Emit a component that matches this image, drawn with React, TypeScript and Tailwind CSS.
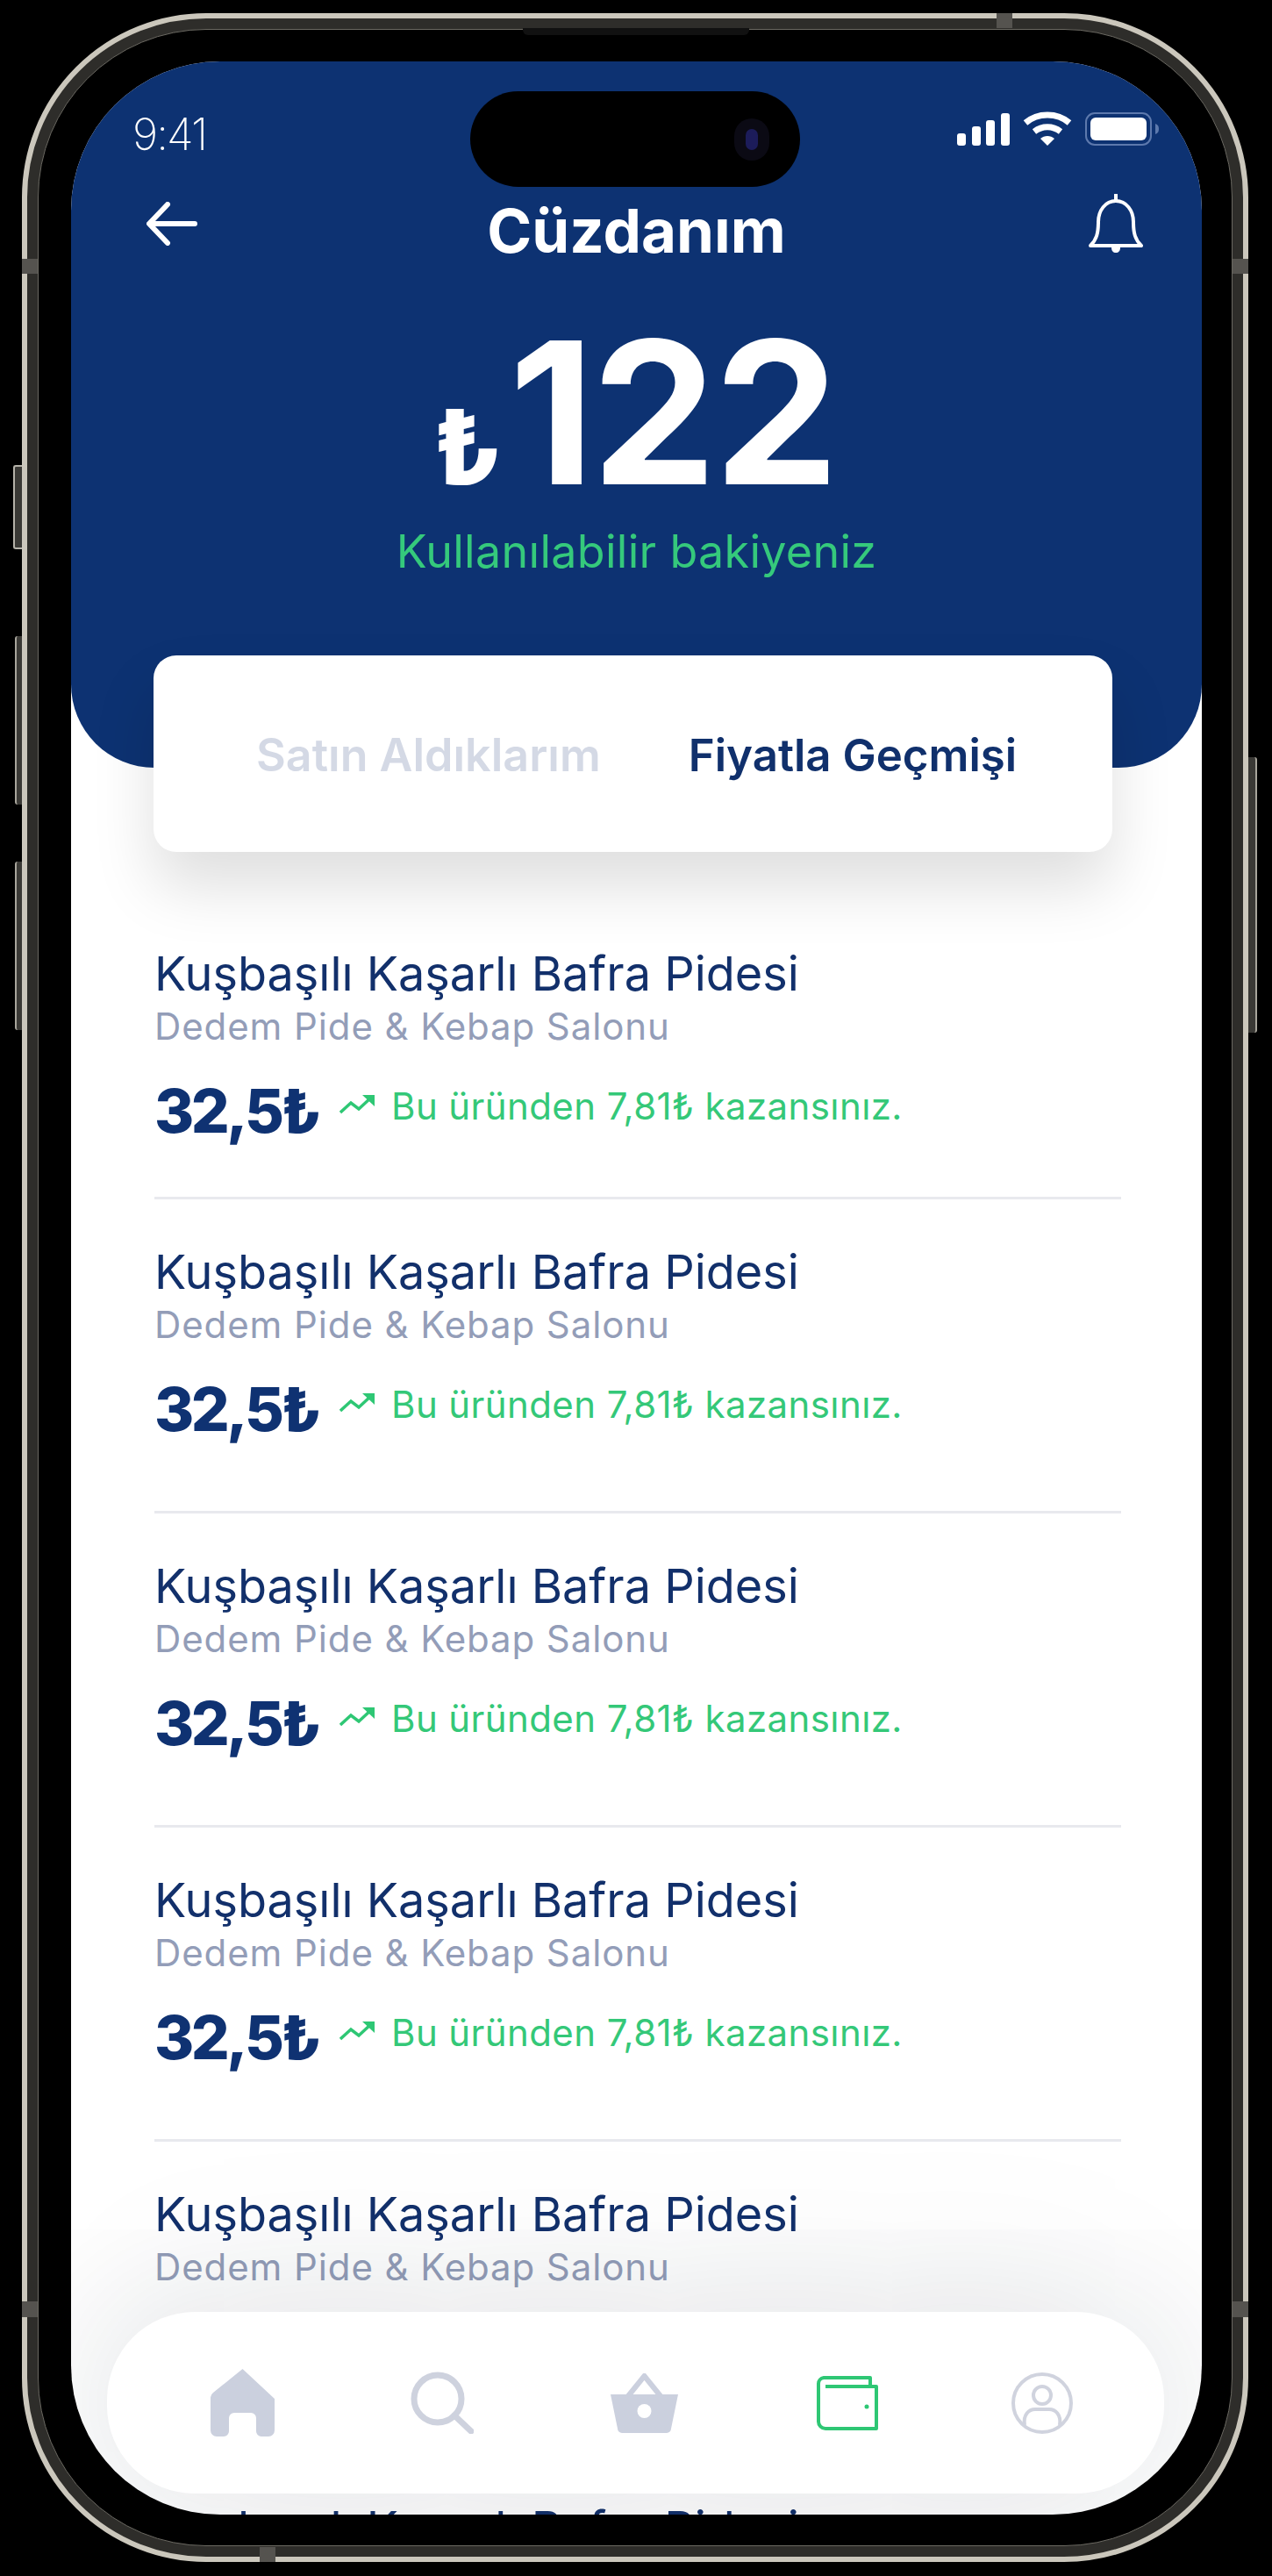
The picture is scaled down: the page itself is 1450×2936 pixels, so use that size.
const sans = "font-['Inter','Liberation_Sans',sans-serif]"

function StatusIcons() {
  return (
    <div className="flex items-center gap-[15px]">
      <svg width="60" height="37" viewBox="0 0 60 37" fill="white">
        <rect x="0" y="23" width="10" height="14" rx="3" />
        <rect x="17" y="15" width="10" height="22" rx="3" />
        <rect x="33" y="8" width="10" height="29" rx="3" />
        <rect x="50" y="0" width="10" height="37" rx="3" />
      </svg>
      <svg width="56" height="40" viewBox="0 0 56 40" fill="none" stroke="white" strokeWidth="7">
        <path d="M3 13c14-12 36-12 50 0" />
        <path d="M13 23c9-7 21-7 30 0" />
        <path d="M20 31l8 8 8-8c-4.500-4-11.500-4-16 0z" fill="white" stroke="none" />
      </svg>
      <svg width="85" height="38" viewBox="0 0 85 38" fill="none">
        <rect x="1" y="1" width="74" height="36" rx="10" stroke="#5d79ad" strokeWidth="2" />
        <rect x="6" y="6" width="64" height="26" rx="6" fill="white" />
        <path d="M80 13c3 1 4 3 4 6s-1 5-4 6z" fill="#5d79ad" />
      </svg>
    </div>
  )
}

function ListRow({ last, first }: { last?: boolean; first?: boolean }) {
  return (
    <div className={first ? 'pt-[34px]' : 'pt-[51px]'}>
      <p className={`${sans} text-[54px] leading-[64px] text-[#12306b]`}>Kuşbaşılı Kaşarlı Bafra Pidesi</p>
      <p className={`${sans} text-[42px] leading-[52px] mt-[2px] tracking-[0.9px] text-[#939db8]`}>Dedem Pide &amp; Kebap Salonu</p>
      <div className={`flex items-start mt-[32px] ${first ? 'pb-[60px]' : 'pb-[78px]'} ${last ? '' : 'border-b-[3px] border-[#e8e9ee]'}`}>
        <span className={`${sans} text-[69px] leading-[76px] font-extrabold tracking-[-3.500px] text-[#0f3272] w-[211px]`}>32,5₺</span>
        <svg className="mt-[18px] w-[40px] h-[24px]" viewBox="0 0 40 24" fill="none">
          <path d="M1 22l12-11 9 7L36 5" stroke="#2ec774" strokeWidth="3.500" />
          <path d="M26 2h14v13z" fill="#2ec774" />
        </svg>
        <span className={`${sans} ml-[19px] mt-[7px] text-[42px] leading-[52px] tracking-[0.4px] text-[#34c878]`}>Bu üründen 7,81₺ kazansınız.</span>
      </div>
    </div>
  )
}

export default function App() {
  return (
    <div className="relative w-[1450px] h-[2936px] bg-black overflow-hidden pl-[25px] pt-[15px]">
      {/* side buttons */}
      <div className="absolute left-[15px] top-[530px] w-[11px] h-[96px] bg-[#3a3935] rounded-l-[3px] border-2 border-r-0 border-[#b5b2a9]" />
      <div className="absolute left-[17px] top-[725px] w-[9px] h-[192px] bg-[#3a3935] rounded-l-[3px] border-l-2 border-[#a8a59c]" />
      <div className="absolute left-[17px] top-[982px] w-[9px] h-[192px] bg-[#3a3935] rounded-l-[3px] border-l-2 border-[#a8a59c]" />
      <div className="absolute left-[1423px] top-[863px] w-[10px] h-[314px] bg-[#3a3935] rounded-r-[3px] border-r-2 border-[#a8a59c]" />

      {/* phone frame */}
      <div className="relative w-[1398px] h-[2905px] rounded-[210px] border-[6px] border-[#cbc7bc] bg-[#2e2d2a] p-[12px]">
        <div className="w-full h-full rounded-[192px] border border-[#6b6962] bg-black pt-[36px] pl-[37px]">
          <div className="relative w-[1289px] h-[2796px] rounded-[170px] bg-white overflow-hidden">
            {/* header */}
            <div className="h-[805px] bg-[#0d3272] rounded-b-[95px] pt-[57px]">
              <div className="flex justify-between items-start pl-[70px] pr-[48px]">
                <span className="font-['Inter',sans-serif] font-extralight text-[50px] leading-[52px] tracking-[-2px] text-white">9:41</span>
                <StatusIcons />
              </div>
              <div className="relative flex justify-between items-center pl-[86px] pr-[66px] mt-[42px]">
                <svg className="w-[58px] h-[50px]" viewBox="0 0 58 50" fill="none" stroke="white" strokeWidth="6" strokeLinecap="round" strokeLinejoin="round">
                  <path d="M55 25H4M24 3L3 25l21 22" />
                </svg>
                <span className={`${sans} absolute inset-x-0 pt-[15px] text-center text-[69px] leading-[72px] font-bold text-white`}>Cüzdanım</span>
                <svg className="w-[64px] h-[68px]" viewBox="0 0 64 68" fill="none" stroke="white" strokeWidth="4" strokeLinejoin="round">
                  <path d="M3 59c7-7 9-14 9-27 0-13 8-24 20-24s20 11 20 24c0 13 2 20 9 27z" />
                  <path d="M32 1v6" strokeLinecap="round" />
                  <path d="M27 61c0 4 2 6 5 6s5-2 5-6z" fill="white" stroke="none" />
                </svg>
              </div>
              <div className="flex items-end justify-center mt-[86px] pr-[4px]">
                <span className={`${sans} text-[118px] leading-[110px] font-extrabold text-white mr-[8px] mb-[1px]`}>₺</span>
                <span className={`${sans} text-[226px] leading-[190px] font-bold tracking-[-3px] text-white`}>122</span>
              </div>
              <p className={`${sans} text-center text-[52px] leading-[56px] tracking-[0.3px] text-[#35c97c] mt-[36px]`}>Kullanılabilir bakiyeniz</p>
            </div>

            {/* tabs */}
            <div className="relative ml-[94px] mr-[102px] mt-[-128px] h-[224px] rounded-[26px] bg-white shadow-[0_40px_70px_rgba(0,0,0,0.13)] flex items-center pl-[117px] pt-[4px] gap-[100px]">
              <span className={`${sans} text-[52px] font-semibold text-[#d4d9e5]`}>Satın Aldıklarım</span>
              <span className={`${sans} text-[51px] font-semibold text-[#10306c]`}>Fiyatla Geçmişi</span>
            </div>

            {/* list */}
            <div className="ml-[95px] mr-[92px] pt-[73px]">
              <ListRow first />
              <ListRow />
              <ListRow />
              <ListRow />
              <ListRow />
              <ListRow last />
            </div>

            {/* bottom nav */}
            <div className="absolute left-[41px] right-[43px] top-[2565px] h-[207px] rounded-[100px] bg-white shadow-[0_0_200px_rgba(20,30,50,0.17)] flex items-center justify-between pl-[118px] pr-[104px]">
              <svg className="w-[73px] h-[77px]" viewBox="0 0 73 77" fill="#cbd0de">
                <path d="M36.500 0L73 34v36a7 7 0 0 1-7 7h-8a6 6 0 0 1-6-6V56a6 6 0 0 0-6-6H27a6 6 0 0 0-6 6v15a6 6 0 0 1-6 6H7a7 7 0 0 1-7-7V34a8 8 0 0 1 3-7z" />
              </svg>
              <svg className="w-[72px] h-[71px]" viewBox="0 0 72 71" fill="none" stroke="#ced2de" strokeWidth="7" strokeLinecap="round">
                <circle cx="31" cy="31" r="27" />
                <path d="M50 50l19 18" />
              </svg>
              <svg className="w-[79px] h-[68px]" viewBox="0 0 79 68" fill="none">
                <path d="M21 26L39.500 3 58 26" stroke="#cbd0de" strokeWidth="6" />
                <path d="M1 24h77l-8 39a5 5 0 0 1-5 5H14a5 5 0 0 1-5-5z" fill="#cbd0de" />
                <circle cx="39.500" cy="43" r="8" fill="white" />
              </svg>
              <svg className="w-[70px] h-[62px] overflow-visible" viewBox="-3 0 70 62" fill="none" stroke="#2ec774" strokeWidth="4" strokeLinejoin="round">
                <path d="M8 2h53v10h7v48H10a8 8 0 0 1-8-8V9a7 7 0 0 1 6-7z" />
                <path d="M10 12h52" strokeWidth="4" />
                <circle cx="57" cy="35" r="2.500" fill="#2ec774" stroke="none" />
              </svg>
              <svg className="w-[70px] h-[70px]" viewBox="0 0 70 70" fill="none" stroke="#d0d3de" strokeWidth="4">
                <circle cx="35" cy="35" r="33" />
                <circle cx="35" cy="26" r="10" />
                <path d="M15 60c-2-12 5-18 12-18h16c7 0 14 6 12 18" />
              </svg>
            </div>

            {/* dynamic island */}
            <div className="absolute left-[455px] top-[34px] w-[376px] h-[109px] rounded-[55px] bg-black flex items-center justify-end pr-[35px]">
              <div className="w-[40px] h-[48px] rounded-full bg-[#0b0a14] flex items-center justify-center">
                <div className="w-[14px] h-[24px] rounded-full bg-[#1c1c5a]" />
              </div>
            </div>
          </div>
        </div>
      </div>

      {/* speaker slit and antenna bands */}
      <div className="absolute left-[596px] top-[32px] w-[258px] h-[8px] rounded-b-[6px] bg-[#111]" />
      <div className="absolute left-[25px] top-[295px] w-[18px] h-[17px] bg-[#55534f]" />
      <div className="absolute left-[1405px] top-[295px] w-[18px] h-[17px] bg-[#55534f]" />
      <div className="absolute left-[25px] top-[2623px] w-[18px] h-[18px] bg-[#55534f]" />
      <div className="absolute left-[1405px] top-[2623px] w-[18px] h-[18px] bg-[#55534f]" />
      <div className="absolute left-[1136px] top-[15px] w-[18px] h-[17px] bg-[#55534f]" />
      <div className="absolute left-[296px] top-[2903px] w-[18px] h-[17px] bg-[#55534f]" />
    </div>
  )
}
